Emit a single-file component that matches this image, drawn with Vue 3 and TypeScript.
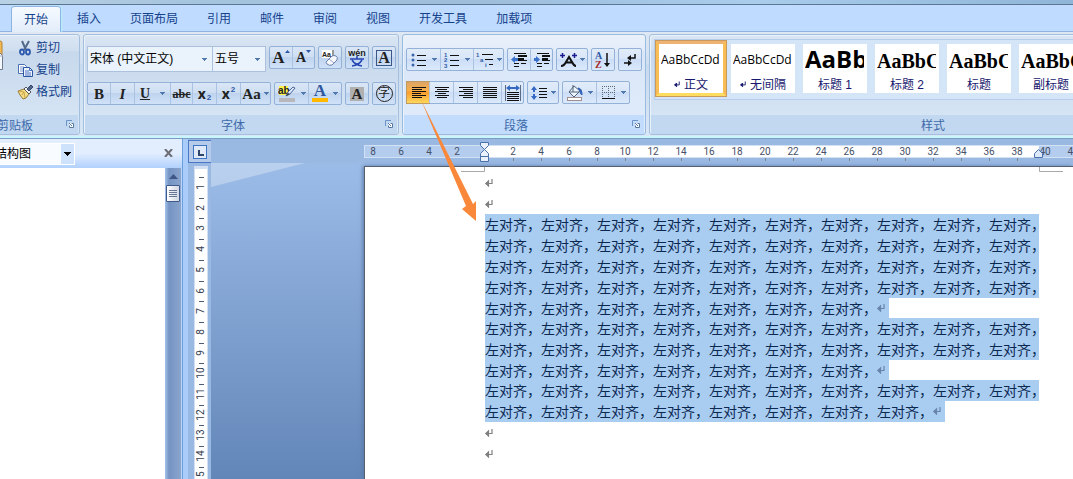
<script setup lang="ts">
interface StyleCard {
  name: string
  sample: string
  kind: string
  mark: boolean
}

interface Line {
  count: number
  full: boolean
}

const tabs: string[] = ['开始', '插入', '页面布局', '引用', '邮件', '审阅', '视图', '开发工具', '加载项']

const styleCards: StyleCard[] = [
  { name: '正文', sample: 'AaBbCcDd', kind: 'plain', mark: true },
  { name: '无间隔', sample: 'AaBbCcDd', kind: 'plain', mark: true },
  { name: '标题 1', sample: 'AaBb', kind: 'h1', mark: false },
  { name: '标题 2', sample: 'AaBbC', kind: 'h2', mark: false },
  { name: '标题', sample: 'AaBbC', kind: 'h2', mark: false },
  { name: '副标题', sample: 'AaBbC', kind: 'h2', mark: false },
]

const full = (): Line => ({ count: 10, full: true })
const paragraphs: Line[][] = [
  [full(), full(), full(), full(), { count: 7, full: false }],
  [full(), full(), { count: 7, full: false }],
  [full(), { count: 8, full: false }],
]

const leftNumbers: number[] = [8, 6, 4, 2]
const rightNumbers: number[] = Array.from({ length: 21 }, (_, i) => 2 + i * 2)
const verticalNumbers = Array.from({ length: 15 }, (_, i) => ({
  n: i + 1,
  y: Math.round(18 + i * 20.7),
  tick: Math.round(8 + i * 20.7),
}))
</script>

<template>
  <div class="app">
    <svg width="0" height="0" class="defs" aria-hidden="true">
      <symbol id="down" viewBox="0 0 5 3"><path d="M0 0h5v1H4v1H3v1H2V2H1V1H0z" fill="#5079b0" /></symbol>
      <symbol id="ret" viewBox="0 0 8 8"><path d="M7 0v4.500H2M3.500 2L1 4.500 3.500 7z" fill="none" stroke="currentColor" stroke-width="1.200" /><path d="M0 4.500L3.500 2v5z" fill="currentColor" /></symbol>
      <symbol id="launch" viewBox="0 0 8 8"><path d="M.5 6V.5H6" fill="none" stroke="#6c94c8" /><path d="M3 3h5v5H3z" fill="#fff" /><path d="M3.500 5.500v2h4v-4h-2M3 3l3 3" fill="none" stroke="#54779f" /></symbol>
    </svg>

    <div class="titlebar"></div>
    <nav class="tabs">
      <button v-for="(t, i) in tabs" :key="t" type="button" class="tab" :class="{ active: i === 0 }">{{ t }}</button>
    </nav>

    <div class="ribbon">
      <section class="group clipboard">
        <div class="body">
          <button type="button" class="paste">
            <svg width="30" height="32" viewBox="0 0 30 32"><rect x="1" y="3" width="28" height="24" rx="2" fill="#f2b952" stroke="#b98232" /><path d="M13.500 12.500h11l5 5v14h-16z" fill="#f5f8fd" stroke="#707b8b" /><path d="M24 12v6h6M16 20h11M16 23h11M16 26h11" fill="none" stroke="#9eacc0" /></svg>
            <span>粘贴</span>
          </button>
          <div class="commands">
            <button type="button" class="command">
              <svg width="16" height="16" viewBox="0 0 16 16"><path d="M5 1l4 9M12 1L7 10" stroke="#52698b" stroke-width="2" fill="none" /><ellipse cx="5" cy="12" rx="2" ry="2.500" fill="none" stroke="#2b58ad" stroke-width="1.800" /><ellipse cx="11" cy="12" rx="2" ry="2.500" fill="none" stroke="#2b58ad" stroke-width="1.800" /></svg>剪切
            </button>
            <button type="button" class="command">
              <svg width="16" height="16" viewBox="0 0 16 16"><path d="M1.500 2.500h6l2 2v7h-8z" fill="#fff" stroke="#4a6fb0" /><path d="M3 5h4M3 7h4M3 9h3" stroke="#7898cf" /><path d="M6.500 5.500h6l3 3v6h-9z" fill="#eef4ff" stroke="#2c56a4" /><path d="M12.500 5.500v3h3M8 9h4M8 11h6M8 13h6" fill="none" stroke="#4a75bd" /></svg>复制
            </button>
            <button type="button" class="command">
              <svg width="16" height="16" viewBox="0 0 16 16"><path d="M1 7l6-2 5 5-3 4-3 1-3-4z" fill="#f3dc83" stroke="#9c7c37" /><path d="M2 7l5 1-2 3M7 8l1 6" fill="none" stroke="#c9a64d" /><path d="M7 5l2-2 5 5-2 2z" fill="#f5f5f5" stroke="#555" /><path d="M10 5l4-4 2 2-4 4z" fill="#536688" stroke="#33476b" /></svg>格式刷
            </button>
          </div>
        </div>
        <footer class="caption"><span>剪贴板</span><button type="button" class="launcher" aria-label="剪贴板选项"><svg width="8" height="8"><use href="#launch" /></svg></button></footer>
      </section>

      <section class="group font">
        <div class="body">
          <div class="row top">
            <div class="combos">
              <div class="combo family"><select aria-label="字体"><option>宋体 (中文正文)</option></select><svg width="5" height="3"><use href="#down" /></svg></div>
              <div class="combo size"><select aria-label="字号"><option>五号</option></select><svg width="5" height="3"><use href="#down" /></svg></div>
            </div>
            <div class="set">
              <button type="button" class="b" aria-label="增大字体"><span class="serif big">A</span><svg class="up" width="5" height="9" viewBox="0 0 5 9"><path d="M0 3h5L2.500 0z" fill="#2d58a8" /></svg></button>
              <button type="button" class="b" aria-label="缩小字体"><span class="serif">A</span><svg class="up" width="5" height="9" viewBox="0 0 5 9"><path d="M0 0h5L2.500 3z" fill="#2d58a8" /></svg></button>
            </div>
            <div class="set"><button type="button" class="b" aria-label="清除格式"><svg width="18" height="18" viewBox="0 0 18 18"><rect x="1" y="1" width="12" height="8" fill="#fff" /><text x="1" y="8" class="tiny">Aa</text><path d="M12 1v7" stroke="#333" /><path d="M6 12l5-5q2-1 4 0t1 4l-5 5q-3 1-5-1t0-3z" fill="#f5f7fd" stroke="#6a7faa" /><path d="M8 10l5 4" stroke="#9aabc9" /></svg></button></div>
            <div class="set"><button type="button" class="b" aria-label="拼音指南"><svg width="18" height="18" viewBox="0 0 18 18"><text x="9" y="7" text-anchor="middle" class="pinyin">wén</text><path d="M9 7v3M2 10h14M4 11q3 5 10 6M14 11q-3 5-10 6" fill="none" stroke="#2546b4" stroke-width="1.500" /></svg></button></div>
            <div class="set"><button type="button" class="b" aria-label="字符边框"><span class="serif boxed">A</span></button></div>
          </div>
          <div class="row bottom">
            <div class="set">
              <button type="button" class="b" aria-label="加粗"><span class="serif heavy">B</span></button>
              <button type="button" class="b w24" aria-label="倾斜"><span class="serif italic">I</span></button>
              <button type="button" class="b w36" aria-label="下划线"><span class="serif under">U</span><svg width="5" height="3"><use href="#down" /></svg></button>
              <button type="button" class="b" aria-label="删除线"><span class="serif strike">abc</span></button>
              <button type="button" class="b w24" aria-label="下标"><span class="scr">x</span><span class="low">2</span></button>
              <button type="button" class="b w24" aria-label="上标"><span class="scr">x</span><span class="high">2</span></button>
              <button type="button" class="b w30 tight" aria-label="更改大小写"><span class="serif case">Aa</span><svg width="5" height="3"><use href="#down" /></svg></button>
            </div>
            <div class="set">
              <button type="button" class="b w33" aria-label="突出显示"><svg width="18" height="18" viewBox="0 0 18 18"><rect x="1" y="1" width="9" height="9" fill="#fff34a" /><text x="0" y="9" class="ab">ab</text><path d="M8 11l2-4 5-5 2 1-5 6z" fill="#dce9fd" stroke="#4e6794" /><path d="M8 11l2-3 2 1z" fill="#333" /><rect x="1" y="13" width="16" height="4" fill="#b7b7bc" /></svg><svg width="5" height="3"><use href="#down" /></svg></button>
              <button type="button" class="b w33" aria-label="字体颜色"><span class="colour">A</span><svg width="5" height="3"><use href="#down" /></svg></button>
            </div>
            <div class="set"><button type="button" class="b" aria-label="字符底纹"><span class="serif shaded">A</span></button></div>
            <div class="set"><button type="button" class="b" aria-label="带圈字符"><span class="ring">字</span></button></div>
          </div>
        </div>
        <footer class="caption"><span>字体</span><button type="button" class="launcher" aria-label="字体选项"><svg width="8" height="8"><use href="#launch" /></svg></button></footer>
      </section>

      <section class="group para hot">
        <div class="body">
          <div class="row top">
            <div class="set">
              <button type="button" class="b w33" aria-label="项目符号"><svg width="16" height="16" viewBox="0 0 16 16"><path d="M6 3.500h9M6 8.500h9M6 13.500h9" stroke="#111" /><g fill="#3c63ab"><circle cx="2" cy="3" r="1.500" /><circle cx="2" cy="8" r="1.500" /><circle cx="2" cy="13" r="1.500" /></g></svg><svg width="5" height="3"><use href="#down" /></svg></button>
              <button type="button" class="b w33" aria-label="编号"><svg width="16" height="16" viewBox="0 0 16 16"><path d="M6 3.500h9M6 8.500h9M6 13.500h9" stroke="#111" /><g class="num"><text x="0" y="5">1</text><text x="0" y="10">2</text><text x="0" y="16">3</text></g></svg><svg width="5" height="3"><use href="#down" /></svg></button>
              <button type="button" class="b w30 tight" aria-label="多级列表"><svg width="18" height="16" viewBox="0 0 18 16"><path d="M6 2.500h11M9 7.500h8M13 12.500h4" stroke="#111" /><g class="num"><text x="0" y="5">1</text><text x="4" y="10">a</text><text x="9" y="15">i</text></g></svg><svg width="5" height="3"><use href="#down" /></svg></button>
            </div>
            <div class="set">
              <button type="button" class="b" aria-label="减少缩进量"><svg width="16" height="16" viewBox="0 0 16 16"><path d="M3 1.500h12M7 8.500h9M3 11.500h5M10 11.500h5M3 14.500h5" stroke="#111" /><path d="M7 4h9M7 7h6" stroke="#111" stroke-width="2" /><path d="M0 7.500L4 4v2h3v3H4v2z" fill="#3c71cc" /></svg></button>
              <button type="button" class="b" aria-label="增加缩进量"><svg width="16" height="16" viewBox="0 0 16 16"><path d="M3 1.500h12M8 8.500h8M3 11.500h5M10 11.500h5M3 14.500h5" stroke="#111" /><path d="M8 4h8M8 7h6" stroke="#111" stroke-width="2" /><path d="M6 7.500L2 4v2H0v3h2v2z" fill="#3c71cc" /></svg></button>
            </div>
            <div class="set"><button type="button" class="b w30 tight" aria-label="中文版式"><svg width="17" height="16" viewBox="0 0 17 16"><path d="M1 14q3 0 5-4l3-5 3 5q2 4 4 4M6 10.500h6" fill="none" stroke="#111" stroke-width="2" /><path d="M0 3.500h5M12 3.500h5M2.500 1v5M14.500 1v5" stroke="#1b1b91" stroke-width="1.500" /></svg><svg width="5" height="3"><use href="#down" /></svg></button></div>
            <div class="set"><button type="button" class="b" aria-label="排序"><svg width="16" height="18" viewBox="0 0 16 18"><text x="0" y="8" class="sort a">A</text><text x="0" y="17" class="sort z">Z</text><path d="M12 2v12" stroke="#111" stroke-width="1.500" /><path d="M9 12h6l-3 4z" fill="#111" /></svg></button></div>
            <div class="set"><button type="button" class="b" aria-label="显示编辑标记"><svg width="14" height="14" viewBox="0 0 14 14"><path d="M12 1v4H6M1 10h6" fill="none" stroke="#111" stroke-width="1.500" /><path d="M4 5l4-3v6zM9 10L5 7v6z" fill="#111" /></svg></button></div>
          </div>
          <div class="row bottom">
            <div class="set">
              <button type="button" class="b pressed" aria-label="左对齐" aria-pressed="true"><svg width="15" height="12" viewBox="0 0 15 12"><path d="M1 .5h14M1 2.500h10M1 4.500h14M1 6.500h9M1 8.500h14M1 10.500h10" stroke="#111" /></svg></button>
              <button type="button" class="b w24" aria-label="居中"><svg width="15" height="12" viewBox="0 0 15 12"><path d="M1 .5h14M3 2.500h10M1 4.500h14M4 6.500h8M1 8.500h14M3 10.500h10" stroke="#111" /></svg></button>
              <button type="button" class="b w24" aria-label="右对齐"><svg width="15" height="12" viewBox="0 0 15 12"><path d="M1 .5h14M5 2.500h10M1 4.500h14M6 6.500h9M1 8.500h14M5 10.500h10" stroke="#111" /></svg></button>
              <button type="button" class="b w24" aria-label="两端对齐"><svg width="15" height="12" viewBox="0 0 15 12"><path d="M1 .5h14M1 2.500h14M1 4.500h14M1 6.500h14M1 8.500h14M1 10.500h14" stroke="#111" /></svg></button>
              <button type="button" class="b" aria-label="分散对齐"><svg width="16" height="16" viewBox="0 0 16 16"><path d="M2 7.500h12M2 9.500h12M2 11.500h12M2 13.500h12M2 15.500h12" stroke="#111" /><path d="M.5 0v16M15.500 0v16" stroke="#5a6b86" /><path d="M1 3l4-3v2h6V0l4 3-4 3V4H5v2z" fill="#3568c2" /></svg></button>
            </div>
            <div class="set"><button type="button" class="b w30 tight" aria-label="行距"><svg width="17" height="16" viewBox="0 0 17 16"><path d="M8 3.500h8M8 6.500h8M8 9.500h8M8 12.500h8" stroke="#111" /><path d="M0 5l3-4 3 4H4v2H2V5zM0 11l3 4 3-4H4V9H2v2z" fill="#3568c2" /></svg><svg width="5" height="3"><use href="#down" /></svg></button></div>
            <div class="set">
              <button type="button" class="b w33" aria-label="底纹"><svg width="17" height="17" viewBox="0 0 17 17"><path d="M3 8l5-6 6 5-6 6z" fill="#eef4fb" stroke="#51647d" /><path d="M7 1v7M3 8h10" fill="none" stroke="#51647d" /><path d="M12 4q4 0 4 7-2-1-2-4z" fill="#2e60b5" stroke="#2e60b5" /><rect x="1.500" y="13.500" width="14" height="3" fill="#fff" stroke="#a18f8f" /></svg><svg width="5" height="3"><use href="#down" /></svg></button>
              <button type="button" class="b w33" aria-label="边框"><svg width="15" height="15" viewBox="0 0 15 15"><path d="M1.500 1v12M7.500 1v12M13.500 1v12M1 1.500h13M1 7.500h13" fill="none" stroke="#5d6876" stroke-dasharray="1 1" /><path d="M1 13.500h13" stroke="#111" /></svg><svg width="5" height="3"><use href="#down" /></svg></button>
            </div>
          </div>
        </div>
        <footer class="caption"><span>段落</span><button type="button" class="launcher" aria-label="段落选项"><svg width="8" height="8"><use href="#launch" /></svg></button></footer>
      </section>

      <section class="group styles">
        <div class="body">
          <div class="gallery">
            <button v-for="(s, i) in styleCards" :key="s.name" type="button" class="card" :class="{ chosen: i === 0 }">
              <span class="sample" :class="s.kind">{{ s.sample }}</span>
              <span class="name"><svg v-if="s.mark" width="6" height="7"><use href="#ret" /></svg>{{ s.name }}</span>
            </button>
          </div>
        </div>
        <footer class="caption"><span>样式</span></footer>
      </section>
    </div>

    <main class="work">
      <aside class="pane">
        <header class="pane-head">
          <div class="pane-pick"><select aria-label="窗格"><option>文档结构图</option></select><svg width="7" height="4" viewBox="0 0 7 4"><path d="M0 0h7v1H6v1H5v1H4v1H3V3H2V2H1V1H0z" fill="#000" /></svg></div>
          <button type="button" class="close" aria-label="关闭"><svg width="9" height="8" viewBox="0 0 9 8"><path d="M1 0l7 8M8 0L1 8" stroke="#6d6d74" stroke-width="2" /></svg></button>
        </header>
        <div class="pane-body">
          <div class="outline"></div>
          <div class="scroll">
            <svg width="9" height="5" viewBox="0 0 9 5"><path d="M0 5h9L4.500 0z" fill="#3f5686" /></svg>
            <div class="thumb"><i></i><i></i><i></i><i></i></div>
          </div>
        </div>
      </aside>

      <div class="vruler">
        <button type="button" class="corner" aria-label="制表符"><svg width="14" height="14" viewBox="0 0 14 14"><rect x=".5" y=".5" width="13" height="13" fill="#dfe9f8" stroke="#3f73c4" /><path d="M6 5v5h5" fill="none" stroke="#2e4568" stroke-width="2" /></svg></button>
        <div class="vstrip">
          <svg width="12" height="313" viewBox="0 0 12 313">
            <template v-for="v in verticalNumbers" :key="v.n">
              <path :d="`M4 ${v.tick}.5h5`" stroke="#4e5b74" />
              <text :transform="`translate(9 ${v.y}) rotate(-90)`" text-anchor="middle" class="rnum">{{ v.n }}</text>
            </template>
          </svg>
        </div>
      </div>

      <div class="canvas">
        <div class="hruler">
          <div class="strip">
            <div class="out"><span v-for="n in leftNumbers" :key="n">{{ n }}</span></div>
            <div class="in"><span v-for="n in rightNumbers" :key="n" :class="{ tick: n < 40 }">{{ n }}</span></div>
          </div>
          <svg class="indent" width="10" height="21" viewBox="0 0 10 21"><path d="M.5.500h8v3l-4 4-4-4zM.5 14.500v-3l4-4 4 4v3zM.5 14.500h8v5h-8z" fill="#e8f1fc" stroke="#4b72ac" /></svg>
          <svg class="rindent" width="10" height="9" viewBox="0 0 10 9"><path d="M.5 8.500v-4l4-4 4 4v4z" fill="#dce9f9" stroke="#4b72ac" /></svg>
        </div>
        <div class="desk">
          <svg class="swath" width="94" height="24" viewBox="0 0 94 24"><path d="M0 0h94L0 24z" fill="#fff" opacity=".3" /></svg>
          <article class="page">
            <svg class="crop left" width="24" height="6" viewBox="0 0 24 6"><path d="M0 4.500h23.500V0" fill="none" stroke="#a9a9a9" /></svg>
            <svg class="crop right" width="24" height="6" viewBox="0 0 24 6"><path d="M24 4.500H.5V0" fill="none" stroke="#a9a9a9" /></svg>
            <div class="blank" v-for="k in 2" :key="'a' + k"><svg width="8" height="8"><use href="#ret" /></svg></div>
            <p v-for="(p, pi) in paragraphs" :key="pi" class="text">
              <span v-for="(l, li) in p" :key="li" class="line" :class="{ full: l.full }">{{ '左对齐，'.repeat(l.count) }}<svg v-if="!l.full" width="8" height="8"><use href="#ret" /></svg></span>
            </p>
            <div class="blank" v-for="k in 2" :key="'b' + k"><svg width="8" height="8"><use href="#ret" /></svg></div>
          </article>
        </div>
      </div>
    </main>

    <svg class="pointer" width="60" height="124" viewBox="0 0 60 124"><path d="M1 0L53 104 56 101V121L42 109 46 106z" fill="#f9883a" /></svg>
  </div>
</template>

<style>
body {
  overflow: hidden;
  background: #9ab9e2;
}
</style>

<style scoped>
.app {
  position: relative;
  display: flex;
  flex-direction: column;
  height: 100vh;
  overflow: hidden;
  font: 12px/16px "Liberation Sans", "Noto Sans CJK SC", sans-serif;
  color: #15428b;
}
.app * { box-sizing: border-box; }
.defs { position: absolute; }
button, select { font: inherit; color: inherit; margin: 0; padding: 0; border: 0; background: none; }
svg { display: block; flex: none; }

.titlebar {
  height: 5px;
  flex: none;
  background: linear-gradient(90deg, #b9d1e4, #a5c4de 18%, #9dbddb 45%, #aacdec 70%, #8fb5d8);
  border-bottom: 1px solid #5d7690;
}
.tabs {
  display: flex;
  gap: 5px;
  flex: none;
  height: 27px;
  padding: 2px 0 0 12px;
  background: #bfdbff;
  border-bottom: 1px solid #8db2e3;
}
.tab { padding: 0 12px; height: 24px; line-height: 24px; white-space: nowrap; }
.tab.active {
  height: 25px;
  background: linear-gradient(#f6faff, #e2edfa);
  border-radius: 3px 3px 0 0;
  box-shadow: 0 0 0 1px #8fb4e2, 1px 0 2px 1px #b5f0fb;
  clip-path: inset(-2px -3px 0 -3px);
}

.ribbon {
  display: flex;
  gap: 3px;
  flex: none;
  height: 107px;
  padding: 2px 0 3px;
  background: linear-gradient(#dfe8f3, #cfdff1 30%, #c8daef 31%, #d9e8f7);
  border-bottom: 1px solid #7e9cc3;
  box-shadow: inset 0 -2px #c9f5fd;
}
.group {
  display: flex;
  flex-direction: column;
  flex: none;
  border: 1px solid #a3bfdd;
  border-radius: 3px;
  background: linear-gradient(#dbe6f3, #cfdef0 16%, #c7d8ec 17%, #d9e8f6);
  box-shadow: inset 1px 1px #e9f1fa;
}
.group.hot { background: linear-gradient(#eaf1fb, #e2ecf9 16%, #d9e6f7 17%, #e0ecfb); border-color: #9abbe0; }
.body { flex: 1; }
.caption { display: flex; align-items: center; height: 19px; padding-top: 2px; background: #c2d8f0; color: #3e6aaa; margin: 0 1px; }
.hot .caption { background: #c1dcfc; }
.caption span { flex: 1; text-align: center; }
.launcher { display: flex; align-items: center; justify-content: center; width: 16px; height: 16px; margin-bottom: 4px; }

.clipboard { width: 130px; margin-left: -50px; }
.clipboard .body { display: flex; padding: 3px 0 0 17px; gap: 7px; }
.clipboard .caption span { padding-left: 16px; }
.paste { width: 40px; display: flex; flex-direction: column; align-items: center; gap: 6px; }
.commands { display: flex; flex-direction: column; padding-left: 2px; margin-top: -1px; }
.command { display: flex; align-items: center; gap: 3px; height: 22px; white-space: nowrap; }

.font { width: 316px; }
.para { width: 244px; }
.styles { width: 568px; }
.row { display: flex; gap: 3px; padding-left: 3px; }
.font .top { height: 36px; margin-top: 11px; }
.para .top { height: 33px; margin-top: 13px; }
.combos { display: flex; }
.combo { display: grid; align-items: center; height: 26px; border: 1px solid #abc1de; background: #eaf2fb; color: #000; }
.combo > *, .pane-pick > * { grid-area: 1 / 1; }
.combo svg { justify-self: end; margin-right: 5px; pointer-events: none; }
.combo select { appearance: none; width: 100%; height: 24px; padding-left: 2px; outline: 0; }
.family { width: 126px; }
.size { width: 54px; margin-left: -1px; }
.set {
  display: flex;
  height: 23px;
  border: 1px solid #94b1d8;
  border-radius: 2px;
  background: linear-gradient(#d9e6f6, #cedef2 48%, #bfd3ee 50%, #d0e2f8);
}
.hot .set { background: linear-gradient(#e2ecf9, #d8e6f8 48%, #cbddf6 50%, #dbe9fb); }
.b { display: flex; align-items: center; justify-content: center; gap: 5px; width: 22px; height: 21px; color: #222; white-space: nowrap; }
.b + .b { border-left: 1px solid #abc3e3; }
.b.w24 { width: 24px; }
.b.w30 { width: 30px; }
.b.w33 { width: 33px; }
.b.w36 { width: 36px; gap: 10px; }
.b.tight { gap: 3px; }
.pressed { background: linear-gradient(#dca466, #f8b04a 40%, #fb9f2e 50%, #fed75c); box-shadow: 0 0 0 1px #c09a63; }
.serif { font: bold 14px/16px "Liberation Serif", serif; }
.big { font-size: 17px; }
.serif + .up { align-self: flex-start; margin: 3px 0 0 -5px; }
.boxed { border: 1px solid #3a5787; font-size: 16px; line-height: 14px; padding: 0 1px; }
.heavy { font-size: 15px; }
.italic { font-style: italic; font-size: 15px; }
.under { text-decoration: underline; }
.strike { text-decoration: line-through; font-size: 12px; }
.scr { font: bold 14px/16px "Open Sans", sans-serif; }
.low, .high { font: bold 8px/8px "Liberation Sans", sans-serif; color: #2d58a8; margin-left: -4px; }
.low { align-self: flex-end; margin-bottom: 2px; }
.high { align-self: flex-start; margin-top: 3px; }
.case { font-size: 15px; }
.colour { width: 16px; height: 17px; border-bottom: 4px solid #ffb900; text-align: center; color: #2e569f; font: bold 17px/12px "Liberation Serif", serif; }
.shaded { background: #b0b0b0; width: 14px; font-size: 15px; text-align: center; line-height: 14px; }
.ring { width: 17px; height: 17px; border: 1px solid #222; border-radius: 50%; line-height: 15px; text-align: center; }
.tiny { font: bold 7px "Liberation Sans", sans-serif; fill: #222; }
.pinyin { font: bold 9px "Liberation Sans", sans-serif; fill: #222; }
.ab { font: bold 10px "Liberation Sans", sans-serif; fill: #222; }
.num { font: bold 6px "Liberation Sans", sans-serif; fill: #2f5aa7; }
.sort { font: bold 10px "Liberation Serif", serif; }
.a { fill: #2f5aa7; }
.z { fill: #a52a2a; }

.gallery { display: flex; margin: 4px 0 0 4px; height: 61px; border: 1px solid #b5cdea; background: #d5e5f8; overflow: hidden; }
.card { display: flex; flex-direction: column; flex: none; width: 72px; height: 57px; border: 4px solid transparent; background: #fff; background-clip: padding-box; color: #17176e; overflow: hidden; }
.chosen { border-color: #eeb272 #f8bd55 #fedc62; outline: 1px solid #c99a5c; outline-offset: -1px; }
.sample { flex: none; width: 59px; height: 31px; margin-left: 2px; overflow: hidden; text-align: left; white-space: nowrap; color: #000; }
.plain { font: 12px/32px "Open Sans", sans-serif; }
.h1 { font: bold 24px/29px "Open Sans", sans-serif; }
.h2 { font: bold 20px/34px "Liberation Serif", serif; }
.name { display: flex; align-items: center; justify-content: center; gap: 4px; width: 64px; white-space: nowrap; height: 18px; padding-top: 1px; }

.work { display: flex; flex: 1; min-height: 0; }
.pane { display: flex; flex-direction: column; flex: none; width: 183px; border-right: 1px solid #6d9fdb; }
.pane-head { display: flex; justify-content: space-between; height: 29px; padding: 4px 6px 0 0; background: linear-gradient(#e2edfe 50%, #b1d1fd); }
.pane-pick { display: grid; align-items: center; width: 108px; height: 22px; margin-left: -33px; border: 1px solid #fff; background: linear-gradient(90deg, #f8fbff 93px, #cfe2fc 93px); color: #000; }
.pane-pick select { appearance: none; height: 20px; width: 100%; padding-left: 3px; outline: 0; }
.pane-pick svg { justify-self: end; margin-right: 3px; pointer-events: none; }
.close { display: flex; align-items: center; width: 12px; height: 19px; }
.pane-body { display: flex; flex: 1; min-height: 0; }
.outline { flex: 1; background: #fff; }
.scroll { display: flex; flex-direction: column; align-items: center; gap: 6px; width: 17px; padding-top: 6px; background: linear-gradient(90deg, #a3c2eb, #7594c4 4px, #8aa5cd); border-right: 1px solid #b9d6fa; }
.thumb { display: flex; flex-direction: column; align-items: center; justify-content: center; gap: 1px; width: 14px; height: 17px; border: 1px solid #415a8c; border-radius: 1px; background: linear-gradient(90deg, #fff, #d1d8e4); }
.thumb i { width: 8px; height: 1px; background: #687793; }
.vruler { display: flex; flex-direction: column; flex: none; width: 28px; border-left: 5px solid #a9ccfa; background: #9ab9e2; }
.corner { display: flex; align-items: center; justify-content: center; width: 24px; height: 23px; margin-top: 1px; border: 1px solid #4a77c6; background: #b6cbea; flex: none; }
.vstrip { flex: 1; width: 14px; min-height: 0; margin: 3px 0 0 6px; border: solid #d3e0f3; border-width: 3px 1px 0; background: #fff; overflow: hidden; }
.rnum { font: 10px Roboto, sans-serif; fill: #333c4e; }

.canvas { flex: 1; min-width: 0; display: flex; flex-direction: column; }
.hruler { position: relative; height: 24px; flex: none; background: #9ab9e2; padding: 6px 0 0 153px; }
.strip { display: flex; height: 13px; border: 1px solid #d3e1f5; border-right: 0; font: 10px/11px Roboto, sans-serif; color: #465068; background: linear-gradient(90deg, #b4ccee 120px, #fff 120px, #fff 674px, #b4ccee 674px); }
.strip span { flex: none; width: 28px; text-align: center; }
.out { display: flex; flex: none; width: 120px; }
.out span:first-child { width: 16px; margin-right: 6px; }
.in { display: flex; flex: none; width: 580px; padding-left: 14px; }
.tick { background: linear-gradient(#7d8490, #7d8490) center bottom / 1px 3px no-repeat; height: 15px; }
.indent { position: absolute; left: 269px; top: 3px; }
.rindent { position: absolute; left: 823px; top: 10px; }
.desk { position: relative; flex: 1; min-height: 0; padding: 3px 0 0 153px; background: linear-gradient(#9cbce8, #6286b8); }
.swath { position: absolute; left: 0; top: 0; }
.page { position: relative; height: 100%; padding: 5px 0 0 120px; background: #fff; border: solid #56606f; border-width: 1px 0 0 1px; box-shadow: -1px 0 4px #5a77a4; color: #0a2850; }
.crop { position: absolute; top: 0; }
.crop.left { left: 96px; }
.crop.right { left: 674px; }
.blank { display: flex; align-items: center; height: 21px; color: #808080; }
.text { margin: 0 0 -1px; font: 14px/20px "Noto Sans CJK SC", sans-serif; }
.text:nth-of-type(3) { margin: 0; }
.line { display: flex; align-items: center; width: fit-content; height: 21px; padding-right: 4px; padding-bottom: 1px; background: #a9ccf1; white-space: nowrap; }
.line svg { color: #6885a8; }
.line.full { width: 554px; padding-right: 0; }
.pointer { position: absolute; left: 420px; top: 100px; pointer-events: none; }
</style>
